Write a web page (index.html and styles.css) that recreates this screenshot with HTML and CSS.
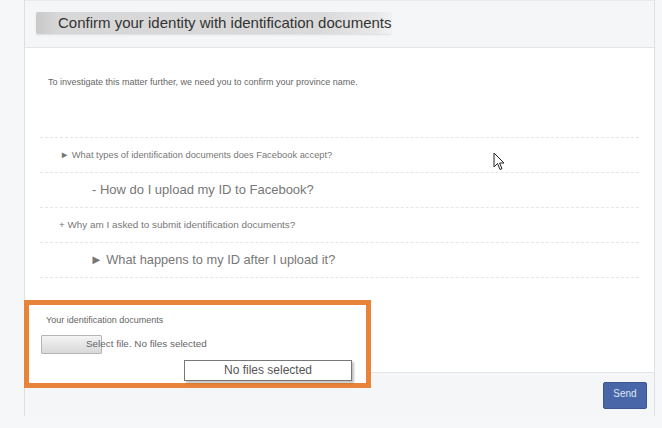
FILE: index.html
```html
<!DOCTYPE html>
<html>
<head>
<meta charset="utf-8">
<link rel="stylesheet" href="styles.css">
</head>
<body>
<div class="card">
  <div class="head">
    <div class="title-band"><span class="title">Confirm your identity with identification documents</span></div>
  </div>
  <div class="content">
    <p class="intro">To investigate this matter further, we need you to confirm your province name.</p>
    <div class="faq">
      <div class="row small"><span>► What types of identification documents does Facebook accept?</span></div>
      <div class="row big"><span>- How do I upload my ID to Facebook?</span></div>
      <div class="row small s2"><span>+ Why am I asked to submit identification documents?</span></div>
      <div class="row big b2"><span>► What happens to my ID after I upload it?</span></div>
    </div>
    <div class="upload">
      <div class="label">Your identification documents</div>
      <div class="file-line"><span class="fbtn"></span><span class="ftext">Select file. No files selected</span></div>
      <div class="nofiles">No files selected</div>
    </div>
  </div>
  <div class="foot"><span class="send">Send</span></div>
  <svg class="cursor" width="12" height="19" viewBox="0 0 12 19"><path d="M1 1 L1 15 L4.5 11.5 L7 17.5 L9 16.6 L6.6 11 L11 11 Z" fill="#fff" stroke="#222" stroke-width="1"/></svg>
</div>
</body>
</html>
```
FILE: styles.css
```css
html,body{margin:0;padding:0}
body{background:#f6f7f8;font-family:"Liberation Sans",Arial,sans-serif;width:662px;height:428px;overflow:hidden}
.card{position:relative;margin-left:24px;width:631px;height:416px;border-left:1px solid #dddfe2;border-right:1px solid #dddfe2;background:#fff;box-sizing:border-box;display:flex;flex-direction:column}
.head{height:48px;background:#f5f6f7;border-top:1px solid #e9ebee;border-bottom:1px solid #e3e5e8;padding-top:11px;box-sizing:border-box}
.title-band{margin-left:11px;width:355px;height:22px;background:linear-gradient(90deg,#c9c9c9 0,#d7d7d7 6%,#dadada 80%,#e8e8e8 96%,#f2f2f2 100%);border-radius:2px;box-shadow:0 1px 2px rgba(0,0,0,.1)}
.title{display:block;padding-left:22px;font-size:15px;line-height:22px;color:#333;white-space:nowrap}
.content{flex:1;position:relative}
.intro{margin:29px 0 0 23px;font-size:9px;color:#666}
.faq{margin:50px 15px 0 15px;border-top:1px dashed #e6e6e6}
.row{height:35px;border-bottom:1px dashed #e6e6e6;display:flex;align-items:center;color:#777;white-space:nowrap;box-sizing:border-box}
.small{font-size:9.3px;padding-left:20px;padding-bottom:1px}
.s2{padding-left:19px;font-size:9.9px}
.big{font-size:13px;padding-left:52px;padding-bottom:2px}
.b2{padding-left:50px;font-size:12.8px}
.upload{position:absolute;left:-1px;top:252px;width:347px;height:88px;border:5px solid #e8843a;box-sizing:border-box;background:#fff}
.label{margin:10px 0 0 17px;font-size:9px;color:#666}
.file-line{position:relative;margin:10px 0 0 12px;height:18px}
.fbtn{position:absolute;left:0;top:0;width:59px;height:17px;background:linear-gradient(#f3f3f3,#d9d9d9);border:1px solid #b5b5b5;border-radius:1px}
.ftext{position:absolute;left:45px;top:1px;font-size:9.9px;color:#666;line-height:15px;white-space:nowrap}
.nofiles{position:absolute;left:155px;top:55px;width:166px;height:19px;border:1px solid #777;background:#fff;box-shadow:2px 2px 2px rgba(0,0,0,.25);font-size:12px;color:#555;text-align:center;line-height:19px}
.foot{height:44px;background:#f5f6f7;border-top:1px solid #e3e5e8;box-sizing:border-box;display:flex;justify-content:flex-end;align-items:flex-start;padding:9px 7px 0 0}
.send{width:44px;height:27px;background:#4966a8;border:1px solid #3d5590;border-radius:2px;box-sizing:border-box;color:#dfe6f3;font-size:10px;text-align:center;line-height:22px}
.cursor{position:absolute;left:468px;top:152px}
```
